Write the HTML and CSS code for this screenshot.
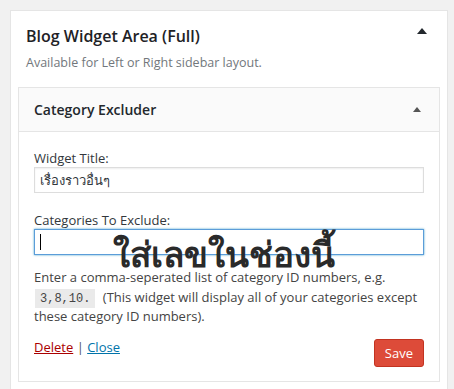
FILE: index.html
```html
<!DOCTYPE html>
<html lang="th">

<head>
    <meta charset="UTF-8">
    <meta name="viewport" content="width=device-width, initial-scale=1.0">
    <title>Blog Widget Area</title>
    <link rel="stylesheet" href="styles.css">
</head>

<body>
    <div class="sidebar">
        <div class="sidebar-head">
            <h2 class="sidebar-title">Blog Widget Area (Full)</h2>
            <span class="arrow"></span>
        </div>
        <p class="sidebar-desc">Available for Left or Right sidebar layout.</p>

        <div class="widget">
            <div class="widget-top">
                <h3>Category Excluder</h3>
                <span class="arrow small"></span>
            </div>
            <div class="widget-inside">
                <label class="field">
                    <span>Widget Title:</span>
                    <input type="text" value="เรื่องราวอื่นๆ">
                </label>
                <label class="field exclude">
                    <span>Categories To Exclude:</span>
                    <input class="focus" type="text" value="">
                    <span class="caret"></span>
                    <span class="note-big">ใส่เลขในช่องนี้</span>
                </label>
                <p class="help">
                    Enter a comma-seperated list of category ID numbers, e.g.
                    <code>3,8,10.</code> (This widget will display all of your categories except
                    these category ID numbers).
                </p>
                <div class="actions">
                    <div class="links">
                        <a href="#" class="delete">Delete</a> | <a href="#" class="close">Close</a>
                    </div>
                    <button class="save">Save</button>
                </div>
            </div>
        </div>
    </div>
</body>

</html>
```
FILE: styles.css
```css
body {
    margin: 0;
    padding: 10px 6px 0 10px;
    background-color: #f1f1f1;
    font-family: "Open Sans", "Noto Sans", sans-serif;
    font-size: 13px;
    color: #23282d;
}

.sidebar {
    background-color: #fff;
    border: 1px solid #e5e5e5;
    border-bottom: none;
    padding: 14px 7px 20px 7px;
    height: 380px;
    box-sizing: border-box;
}

.sidebar-head {
    display: flex;
    justify-content: space-between;
    align-items: flex-start;
    padding: 0 8px;
}

.sidebar-title {
    margin: 0;
    font-size: 16px;
    line-height: 22px;
    font-weight: 600;
    color: #1e2226;
}

.arrow {
    width: 0;
    height: 0;
    border-left: 5px solid transparent;
    border-right: 5px solid transparent;
    border-bottom: 6px solid #23282d;
    margin: 3px 5px 0 0;
}

.arrow.small {
    border-left-width: 4px;
    border-right-width: 4px;
    border-bottom-width: 5px;
    border-bottom-color: #555;
    margin: 0 1px 0 0;
}

.sidebar-desc {
    margin: 7px 8px 15px 8px;
    font-size: 12.5px;
    line-height: 18px;
    color: #72777c;
}

.widget {
    border: 1px solid #e5e5e5;
}

.widget-top {
    display: flex;
    justify-content: space-between;
    align-items: center;
    background-color: #fafafa;
    height: 43px;
    padding: 0 17px 0 15px;
    border-bottom: 1px solid #e5e5e5;
}

.widget-top h3 {
    margin: 0;
    font-size: 14px;
    font-weight: 600;
    color: #23282d;
}

.widget-inside {
    padding: 17px 15px 14px 15px;
}

.field {
    display: flex;
    flex-direction: column;
    line-height: 18px;
    margin-bottom: 18px;
    color: #32373c;
}

.field input {
    height: 26px;
    box-sizing: border-box;
    border: 1px solid #ddd;
    padding: 0 5px;
    font-family: inherit;
    font-size: 13px;
    color: #32373c;
    box-shadow: inset 0 1px 2px rgba(0, 0, 0, 0.07);
}

.exclude {
    position: relative;
    margin-bottom: 13px;
}

.field input.focus {
    border-color: #5b9dd9;
    box-shadow: 0 0 2px rgba(30, 140, 190, 0.8);
}

.caret {
    position: absolute;
    left: 6px;
    bottom: 5px;
    width: 1px;
    height: 16px;
    background-color: #000;
}

.note-big {
    position: absolute;
    left: 79px;
    top: 28px;
    font-size: 35px;
    font-weight: 700;
    color: #2a2a2a;
    line-height: 30px;
    pointer-events: none;
}

.help {
    margin: 0 0 11px 0;
    line-height: 19.5px;
    color: #444;
}

code {
    background-color: #eaeaea;
    font-family: "Liberation Mono", monospace;
    font-size: 12px;
    line-height: 1;
    padding: 3px 5px 2px 5px;
    margin: 0 4px 0 1px;
}

.actions {
    display: flex;
    justify-content: space-between;
    align-items: flex-start;
}

.links {
    color: #555;
    line-height: 18px;
}

.delete {
    color: #a00;
}

.close {
    color: #0073aa;
}

.save {
    margin-top: 1px;
    background-color: #dd4b39;
    border: 1px solid #c23321;
    border-radius: 3px;
    color: #fff;
    font-family: inherit;
    font-size: 13px;
    height: 28px;
    padding: 0 10px;
}
```
